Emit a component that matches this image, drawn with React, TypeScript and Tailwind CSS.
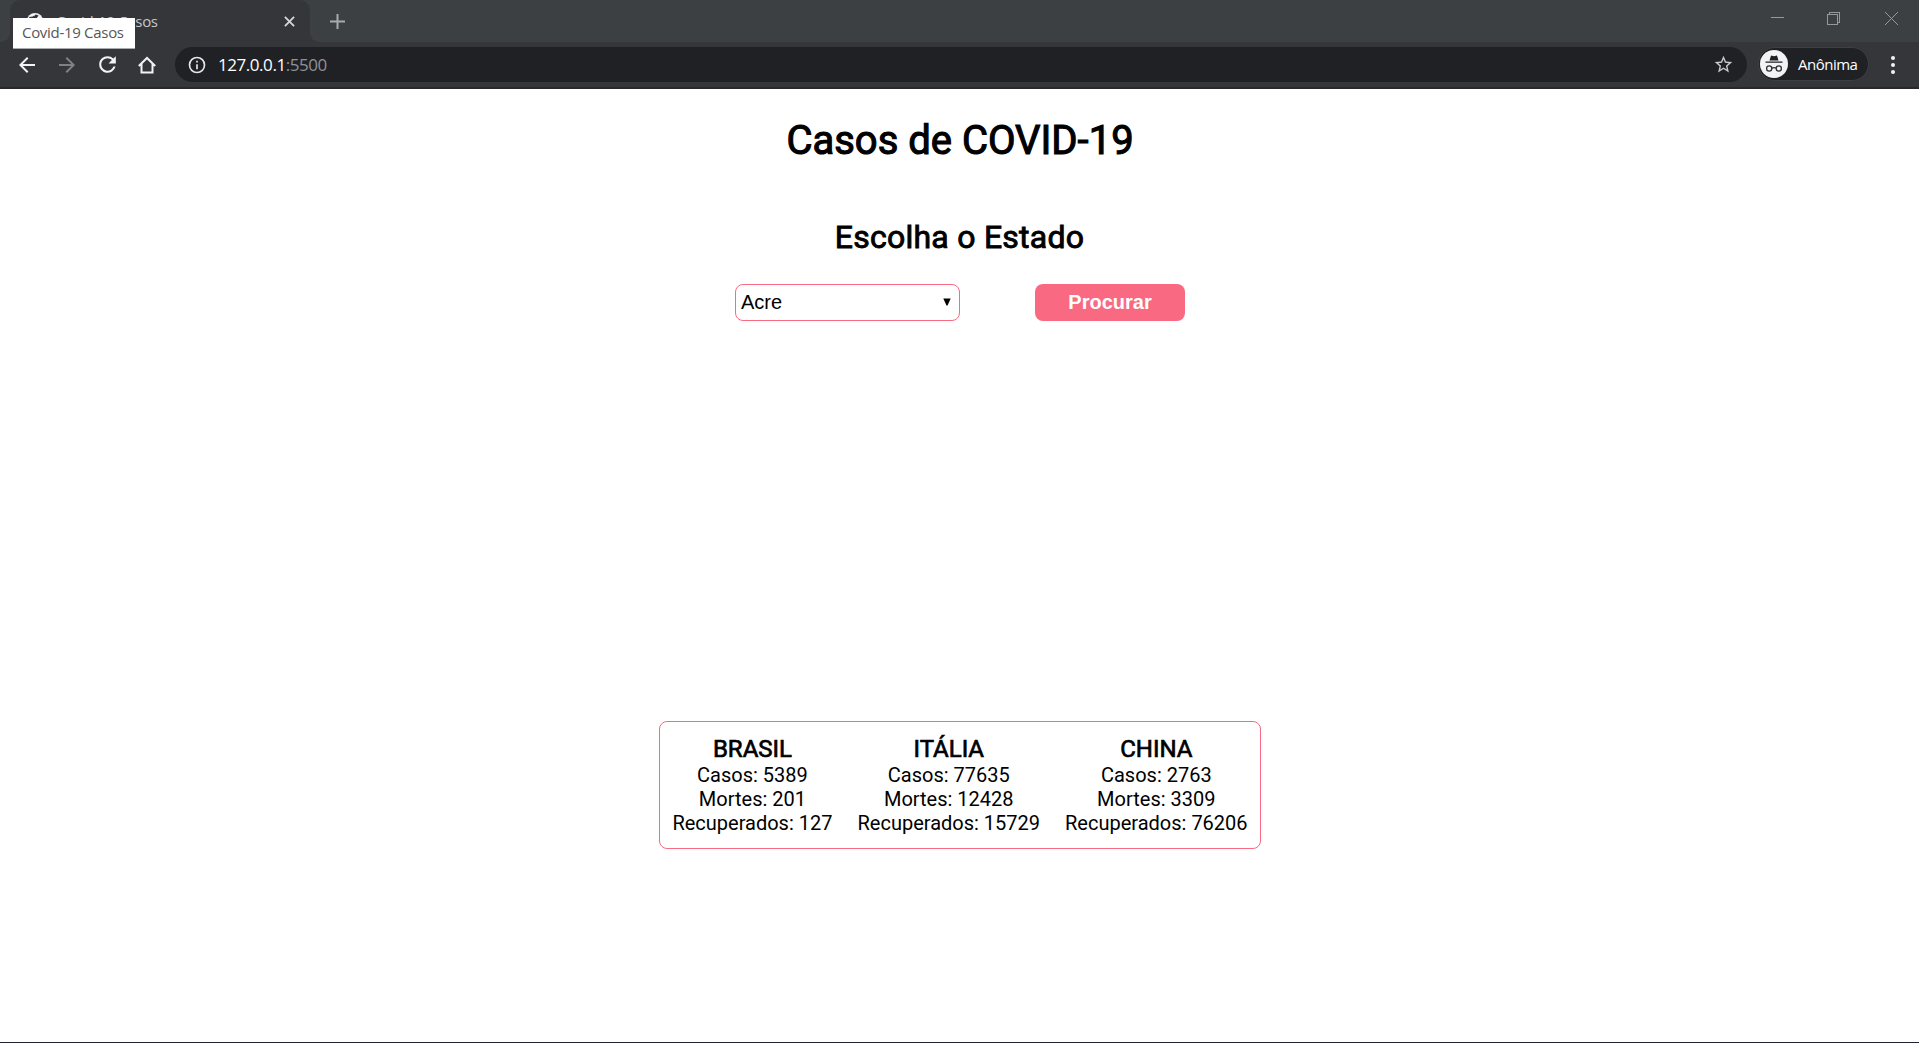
type IconProps = { d: string; className: string };

function Icon({ d, className }: IconProps) {
  return (
    <svg viewBox="0 0 24 24" fill="currentColor" className={className}>
      <path d={d} />
    </svg>
  );
}

const ARROW_BACK = "M20 11H7.83l5.59-5.59L12 4l-8 8 8 8 1.41-1.41L7.83 13H20v-2z";
const ARROW_FORWARD = "M12 4l-1.41 1.41L16.17 11H4v2h12.17l-5.58 5.59L12 20l8-8z";
const REFRESH =
  "M17.65 6.35A7.96 7.96 0 0 0 12 4a8 8 0 1 0 7.73 10h-2.08A6 6 0 1 1 12 6c1.66 0 3.14.69 4.22 1.78L13 11h7V4l-2.35 2.35z";
const INFO =
  "M11 7h2v2h-2zm0 4h2v6h-2zm1-9a10 10 0 1 0 0 20 10 10 0 0 0 0-20zm0 18a8 8 0 1 1 0-16 8 8 0 0 1 0 16z";
const STAR =
  "M22 9.24l-7.19-.62L12 2 9.19 8.63 2 9.24l5.46 4.73L5.82 21 12 17.27 18.18 21l-1.63-7.03L22 9.24zM12 15.4l-3.76 2.27 1-4.28-3.32-2.88 4.38-.38L12 6.1l1.71 4.04 4.38.38-3.32 2.88 1 4.28L12 15.4z";

function TabStrip() {
  return (
    <div className="relative flex h-[42px] shrink-0 bg-[#3c4043]">
      <div className="flex w-[10px] items-end bg-[#35363a]">
        <div className="h-full w-full rounded-br-[9px] bg-[#3c4043]" />
      </div>
      <div className="flex h-full w-[300px] bg-[#3c4043]">
        <div className="flex h-full w-full items-center rounded-t-[10px] bg-[#35363a] pl-4 pr-[15px]">
          <svg viewBox="0 0 20 20" className="size-[18px] shrink-0">
            <circle cx="10" cy="10" r="9" fill="#f1f3f4" />
            <path d="M3.500 5.500c3 0 5-.5 7.500-2.700l3 1-2 3-3 1-1 3-4-1zM11 11l5 1-3 5-3-1z" fill="#35363a" />
          </svg>
          <span className="ml-3 flex-1 whitespace-nowrap text-[15px] tracking-[-0.3px] text-[#c5c7ca]">Covid-19 Casos</span>
          <svg viewBox="0 0 12 12" className="size-[11px] text-[#d5d7da]" stroke="currentColor" strokeWidth="2">
            <path d="M1 1l10 10M11 1L1 11" />
          </svg>
        </div>
      </div>
      <div className="flex flex-1 bg-[#35363a]">
        <div className="flex flex-1 items-start rounded-bl-[9px] bg-[#3c4043]">
          <svg viewBox="0 0 15 15" className="ml-5 mt-[13.5px] size-[15px]" stroke="#a8abae" strokeWidth="2">
            <path d="M7.5 0v15M0 7.5h15" />
          </svg>
          <div className="ml-auto mr-[21px] mt-3 flex text-[#96999b]">
            <svg viewBox="0 0 13 13" className="mr-[43px] size-[13px]" stroke="currentColor" shapeRendering="crispEdges">
              <path d="M0 5.5h13" />
            </svg>
            <svg viewBox="0 0 13 13" className="mr-[45px] size-[13px]" fill="none" stroke="currentColor" shapeRendering="crispEdges">
              <path d="M.5 2.5h10v10H.5zM2.5 2.5v-2h10v10h-2" />
            </svg>
            <svg viewBox="0 0 13 13" className="size-[13px]" stroke="currentColor">
              <path d="M0 0l13 13M13 0L0 13" />
            </svg>
          </div>
        </div>
      </div>
      <div className="absolute left-[13px] top-[18px] z-10 flex h-[31px] w-[122px] items-center whitespace-nowrap border-b border-[#a9abad] bg-white pb-[2px] pl-[9px] text-[15px] tracking-[-0.3px] text-[#575757]">
        Covid-19 Casos
      </div>
    </div>
  );
}

function Toolbar() {
  return (
    <div className="flex h-[47px] shrink-0 items-start border-b-2 border-[#28292c] bg-[#35363a] pt-[5px]">
      <div className="flex h-[35px] items-center gap-4 pl-[15px] text-[#f1f3f4]">
        <Icon d={ARROW_BACK} className="size-6" />
        <Icon d={ARROW_FORWARD} className="size-6 text-[#808184]" />
        <Icon d={REFRESH} className="size-[25px]" />
        <svg viewBox="0 0 24 24" className="-ml-[1.5px] size-6" fill="none" stroke="currentColor" strokeWidth="2">
          <path d="M3.8 13L12 5l8.2 8M6.5 11V19.5h11V11" />
        </svg>
      </div>
      <div className="ml-[16.5px] flex h-[35px] w-[1572px] items-center rounded-full bg-[#202124] pl-3 pr-[13px]">
        <Icon d={INFO} className="size-5 text-[#e4e6e8]" />
        <div className="ml-[11px] flex-1 text-[17px] tracking-[-0.45px] text-white">
          127.0.0.1<span className="text-[#8f9296]">:5500</span>
        </div>
        <Icon d={STAR} className="size-[21px] text-[#c8cacd]" />
      </div>
      <div className="ml-[11px] flex h-[34px] w-[111px] items-center rounded-full border border-[#3e3f43] bg-[#202124] pl-px">
        <svg viewBox="0 0 28 28" className="size-7 shrink-0">
          <circle cx="14" cy="14" r="14" fill="#f1f3f4" />
          <path d="M9.500 10.500l1.300-4.200c.2-.7.6-.8 1.200-.6l2 .5 2-.5c.6-.2 1-.1 1.200.6l1.300 4.200zM5.500 11.500h17v1.200h-17z" fill="#202124" />
          <g fill="none" stroke="#303134" strokeWidth="1.3">
            <circle cx="9.2" cy="18.5" r="2.6" />
            <circle cx="18.8" cy="18.5" r="2.6" />
            <path d="M11.8 18.200q2.200-1 4.400 0" />
          </g>
        </svg>
        <span className="ml-[10px] text-[15px] tracking-[-0.5px] text-white">Anônima</span>
      </div>
      <svg viewBox="0 0 4 18" className="ml-[21.5px] mt-[9px] h-[18px] w-1" fill="#f1f3f4">
        <circle cx="2" cy="2" r="2" />
        <circle cx="2" cy="9" r="2" />
        <circle cx="2" cy="16" r="2" />
      </svg>
    </div>
  );
}

const countries = [
  { name: "BRASIL", cases: 5389, deaths: 201, recovered: 127 },
  { name: "ITÁLIA", cases: 77635, deaths: 12428, recovered: 15729 },
  { name: "CHINA", cases: 2763, deaths: 3309, recovered: 76206 },
];

function CountryCard() {
  return (
    <section className="flex h-[128px] w-[602px] justify-center gap-[25px] rounded-lg border border-[#f76a82] pl-px pt-[13px] text-center text-[20px] leading-6">
      {countries.map((c) => (
        <div key={c.name} className="whitespace-nowrap">
          <h3 className="text-[24px] leading-7 [-webkit-text-stroke:0.7px_black]">{c.name}</h3>
          <p>Casos: {c.cases}</p>
          <p>Mortes: {c.deaths}</p>
          <p>Recuperados: {c.recovered}</p>
        </div>
      ))}
    </section>
  );
}

export default function App() {
  return (
    <div className="flex h-[1043px] w-[1919px] flex-col overflow-hidden border-b border-[#1d2433] bg-white font-['Open_Sans',sans-serif]">
      <TabStrip />
      <Toolbar />
      <main className="flex flex-1 flex-col items-center font-['Roboto',sans-serif] text-black">
        <h1 className="mt-7 pl-px text-[40px] leading-[48px] [-webkit-text-stroke:1.1px_black]">Casos de COVID-19</h1>
        <h2 className="mt-[52px] text-[32px] leading-10 tracking-[0.25px] [-webkit-text-stroke:0.9px_black]">Escolha o Estado</h2>
        <div className="mt-[27px] flex gap-[75px] font-['Liberation_Sans',Arial,sans-serif] text-[20px]">
          <button className="flex h-[37px] w-[225px] items-center justify-between rounded-lg border border-[#f76a82] pb-px pl-[5.5px] pr-[8px]">
            Acre
            <svg viewBox="0 0 8 8" className="size-2">
              <path d="M.3.5h7.4L4.500 7.500h-1z" />
            </svg>
          </button>
          <button className="h-[37px] w-[150px] rounded-lg bg-[#f96a82] pb-px pl-px font-bold text-white">Procurar</button>
        </div>
        <div className="mt-[400px]">
          <CountryCard />
        </div>
      </main>
    </div>
  );
}
